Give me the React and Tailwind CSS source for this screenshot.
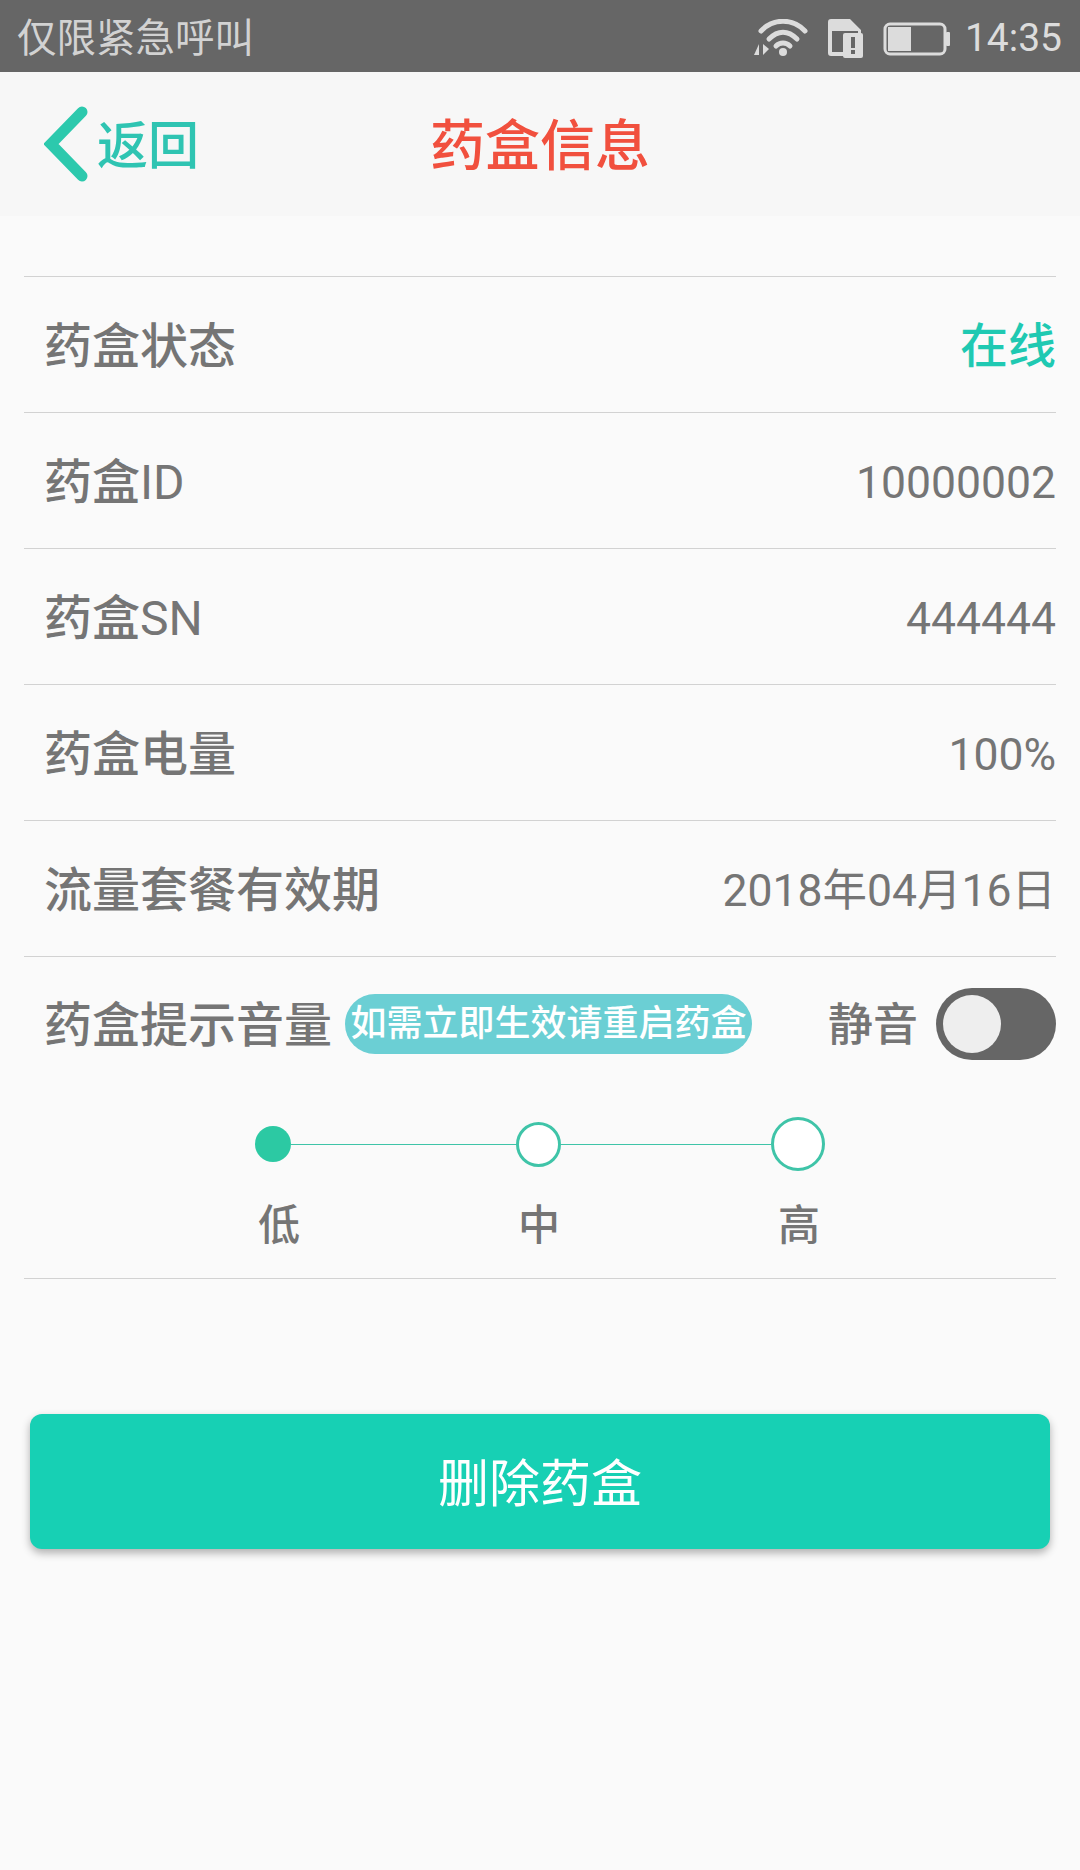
import React from "react";

const infoRows = [
  { label: "药盒状态", value: "在线", online: true },
  { label: "药盒", suffix: "ID", value: "10000002" },
  { label: "药盒", suffix: "SN", value: "444444" },
  { label: "药盒电量", value: "100%" },
  { label: "流量套餐有效期", value: "2018年04月16日" },
];

const StatusIcons = () => (
  <div className="flex items-center">
    <svg width="62" height="40" viewBox="0 0 62 40" fill="none" stroke="#dcdcdc" strokeLinecap="round">
      <path d="M12 12 C24 -1 44 -1 56 12" strokeWidth="5" />
      <path d="M20 20 C29 11 39 11 48 20" strokeWidth="5" />
      <path d="M27 27 C31 23 37 23 41 27" strokeWidth="5" />
      <circle cx="34" cy="33" r="4" fill="#dcdcdc" stroke="none" />
      <path d="M10 25 L10 36 L5 36 Z" fill="#dcdcdc" stroke="none" />
      <path d="M14 25 L14 36 L20 30 Z" fill="#dcdcdc" stroke="none" />
    </svg>
    <svg className="ml-[17px]" width="36" height="40" viewBox="0 0 36 40">
      <path d="M3 0 H22 L33 11 V15 H30 V12 H4 V33 H16 V37 H3 Q0 37 0 34 V3 Q0 0 3 0 Z" fill="#dcdcdc" />
      <rect x="15" y="14" width="20" height="25" rx="2" fill="#dcdcdc" />
      <rect x="23" y="18" width="4" height="11" fill="#666666" />
      <rect x="23" y="31" width="4" height="4" fill="#666666" />
    </svg>
    <svg className="ml-[19px]" width="67" height="34" viewBox="0 0 67 34">
      <rect x="2" y="2" width="60" height="30" rx="5" fill="none" stroke="#dcdcdc" strokeWidth="3" />
      <rect x="5" y="5" width="23" height="24" fill="#dcdcdc" />
      <rect x="63" y="10" width="4" height="14" rx="1" fill="#dcdcdc" />
    </svg>
    <span className="ml-[15px] text-[39px] leading-none text-[#dcdcdc]">14:35</span>
  </div>
);

const VolumeDot = ({ size }) => (
  <div className={`shrink-0 rounded-full bg-white border-[3px] border-[#3fc4a8] ${size}`} />
);

const App = () => {
  return (
    <div className="w-[1080px] h-[1870px] bg-[#fafafa] font-['Roboto','Noto_Sans_CJK_SC',sans-serif]">
      {/* status bar */}
      <div className="h-[72px] bg-[#666666] pt-[5px] pl-[17px] pr-[18px] flex items-center justify-between">
        <span className="text-[39.5px] leading-none text-[#d2d2d2]">仅限紧急呼叫</span>
        <StatusIcons />
      </div>

      {/* header */}
      <div className="relative h-[144px] pt-[5px] bg-[#f7f7f7] flex items-center justify-center">
        <button className="absolute left-[44px] top-[34px] flex items-center">
          <svg width="46" height="76" viewBox="0 0 46 76" fill="none">
            <path d="M38 6 L7 38 L38 70" stroke="#2cc9ad" strokeWidth="11" strokeLinecap="round" strokeLinejoin="miter" />
          </svg>
          <span className="ml-[7px] mt-[4px] text-[51px] leading-none font-medium text-[#2fc4b2]">返回</span>
        </button>
        <h1 className="text-[55px] leading-none font-medium text-[#f1503e]">药盒信息</h1>
      </div>

      {/* info list */}
      <div className="mt-[60px] mx-[24px] border-t border-[#d2d2d2] text-[#757575]">
        {infoRows.map((row) => (
          <div
            key={row.label + (row.suffix || "")}
            className="h-[136px] pt-[5px] border-b border-[#d2d2d2] pl-[20px] flex items-center justify-between"
          >
            <span className="text-[48px] leading-none font-medium">
              {row.label}
              {row.suffix && <span className="font-normal">{row.suffix}</span>}
            </span>
            <span
              className={
                row.online
                  ? "text-[48px] leading-none font-medium text-[#1fc9b2]"
                  : "text-[44.5px] leading-none"
              }
            >
              {row.value}
            </span>
          </div>
        ))}

        {/* volume */}
        <div className="h-[322px] border-b border-[#d2d2d2]">
          <div className="pt-[31px] pl-[20px] flex items-center whitespace-nowrap">
            <span className="shrink-0 mt-[3px] text-[48px] leading-none font-medium">药盒提示音量</span>
            <span className="shrink-0 ml-[13px] h-[60px] w-[407px] rounded-[30px] bg-[#6bcfd4] flex items-center justify-center text-[36px] leading-none font-medium text-white">
              如需立即生效请重启药盒
            </span>
            <span className="shrink-0 ml-[76px] mt-[3px] text-[45px] leading-none font-medium">静音</span>
            <div className="shrink-0 ml-[18px] h-[72px] w-[120px] rounded-[36px] bg-[#666666] flex items-center pl-[7px]">
              <div className="h-[58px] w-[58px] rounded-full bg-[#eeeeee]" />
            </div>
          </div>

          <div className="mt-[57px] ml-[231px] flex items-center h-[54px]">
            <div className="shrink-0 w-[36px] h-[36px] rounded-full bg-[#2cc9a3]" />
            <div className="w-[225px] h-[1px] bg-[#3fc4a8]" />
            <VolumeDot size="w-[45px] h-[45px]" />
            <div className="w-[210px] h-[1px] bg-[#3fc4a8]" />
            <VolumeDot size="w-[54px] h-[54px]" />
          </div>

          <div className="mt-[34px] ml-[234px] w-[562px] flex justify-between text-[42px] leading-none font-medium">
            <span>低</span>
            <span>中</span>
            <span>高</span>
          </div>
        </div>
      </div>

      {/* delete */}
      <button className="block mt-[135px] mx-[30px] w-[1020px] h-[135px] pt-[5px] rounded-[12px] bg-[#17d0b4] text-white text-[51px] leading-none shadow-[0_4px_8px_rgba(0,0,0,0.3)]">
        删除药盒
      </button>
    </div>
  );
};

export default App;
